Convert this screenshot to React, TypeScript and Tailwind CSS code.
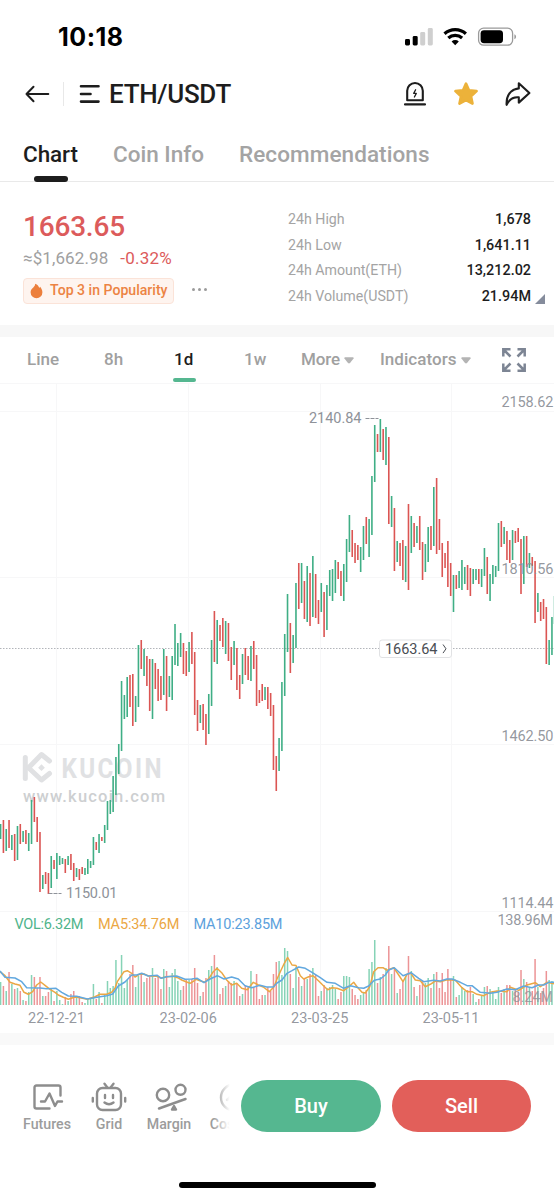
import React from 'react';

// [high y, low y, volume height, up = 1 / down = 0]
const CANDLES: number[][] = [
  [824, 839, 23, 1], [820, 853, 19, 0], [829, 851, 14, 1], [820, 848, 33, 0], [835, 850, 21, 1], [834, 861, 16, 0],
  [826, 860, 17, 1], [824, 844, 14, 0], [831, 842, 5, 1], [830, 844, 4, 0], [833, 851, 13, 1], [800, 844, 30, 1],
  [797, 822, 28, 0], [817, 842, 17, 0], [832, 892, 28, 0], [875, 889, 9, 1], [872, 884, 9, 0], [873, 894, 13, 0],
  [856, 888, 16, 1], [860, 869, 4, 0], [853, 879, 14, 1], [856, 865, 5, 1], [858, 864, 1, 1], [859, 873, 8, 0],
  [856, 865, 4, 1], [854, 870, 11, 0], [863, 881, 14, 0], [868, 877, 9, 1], [869, 880, 9, 0], [867, 874, 3, 0],
  [868, 875, 2, 1], [859, 874, 6, 1], [861, 868, 7, 1], [837, 865, 21, 1], [842, 850, 6, 0], [834, 853, 13, 1],
  [837, 841, 2, 0], [825, 843, 11, 1], [801, 830, 24, 1], [800, 814, 17, 1], [776, 812, 19, 1], [757, 795, 45, 1],
  [744, 774, 22, 1], [681, 751, 50, 1], [695, 719, 17, 1], [677, 717, 25, 1], [675, 707, 31, 0], [674, 726, 40, 0],
  [696, 722, 18, 1], [645, 707, 29, 1], [640, 669, 32, 0], [649, 676, 23, 1], [656, 686, 27, 0], [659, 711, 28, 0],
  [659, 719, 37, 1], [663, 689, 27, 0], [669, 701, 28, 0], [676, 700, 16, 0], [649, 695, 36, 1], [656, 711, 34, 0],
  [676, 697, 18, 1], [656, 700, 32, 1], [624, 665, 36, 1], [643, 666, 24, 1], [633, 657, 15, 1], [643, 674, 19, 0],
  [651, 676, 25, 0], [642, 672, 25, 1], [632, 664, 26, 0], [652, 715, 37, 0], [700, 731, 22, 0], [705, 723, 9, 1],
  [704, 730, 13, 0], [714, 745, 27, 0], [694, 734, 35, 1], [640, 706, 39, 1], [611, 662, 50, 0], [620, 664, 38, 1],
  [625, 641, 11, 0], [618, 647, 17, 0], [621, 654, 19, 1], [623, 661, 24, 0], [647, 680, 22, 0], [641, 665, 24, 1],
  [648, 690, 22, 0], [675, 699, 9, 0], [654, 684, 11, 1], [648, 675, 20, 0], [656, 680, 18, 0], [646, 681, 34, 1],
  [641, 669, 18, 0], [655, 706, 31, 0], [690, 703, 6, 0], [684, 701, 10, 0], [687, 700, 10, 1], [687, 709, 18, 0],
  [693, 716, 14, 0], [705, 770, 31, 0], [756, 791, 43, 0], [738, 771, 44, 1], [682, 751, 30, 1], [634, 696, 57, 1],
  [594, 652, 54, 1], [623, 673, 31, 0], [635, 663, 17, 1], [583, 648, 38, 1], [563, 609, 28, 0], [563, 603, 19, 1],
  [581, 619, 27, 0], [566, 622, 26, 1], [573, 626, 31, 0], [556, 617, 37, 1], [574, 618, 30, 0], [600, 624, 9, 0],
  [583, 612, 14, 1], [592, 637, 20, 0], [585, 630, 17, 1], [570, 596, 18, 1], [569, 601, 20, 1], [560, 593, 16, 1],
  [562, 579, 6, 0], [571, 596, 13, 0], [564, 601, 29, 1], [539, 582, 29, 1], [515, 552, 28, 1], [530, 557, 16, 0],
  [543, 563, 10, 0], [545, 560, 6, 0], [547, 572, 10, 1], [526, 560, 12, 1], [517, 544, 15, 0], [519, 557, 36, 1],
  [476, 535, 43, 1], [425, 482, 65, 1], [434, 452, 22, 0], [419, 452, 28, 1], [429, 460, 31, 0], [427, 465, 37, 1],
  [437, 524, 59, 0], [496, 527, 31, 1], [508, 571, 36, 0], [541, 562, 12, 1], [543, 566, 16, 0], [540, 580, 25, 0],
  [546, 582, 29, 1], [504, 590, 49, 0], [516, 553, 34, 1], [523, 547, 18, 0], [526, 543, 9, 1], [516, 550, 20, 0],
  [542, 580, 24, 0], [544, 572, 22, 1], [527, 562, 27, 1], [526, 550, 17, 0], [487, 546, 31, 1], [478, 554, 33, 0],
  [519, 550, 17, 0], [543, 577, 32, 0], [553, 568, 13, 0], [541, 587, 36, 0], [563, 596, 26, 0], [575, 612, 29, 1],
  [575, 589, 8, 0], [571, 588, 10, 1], [560, 590, 18, 1], [567, 584, 14, 1], [565, 590, 15, 0], [568, 596, 18, 0],
  [569, 584, 11, 1], [569, 580, 3, 1], [569, 584, 6, 0], [569, 587, 9, 1], [548, 576, 18, 1], [557, 594, 19, 0],
  [574, 601, 16, 1], [565, 584, 14, 1], [566, 577, 6, 1], [523, 571, 18, 1], [521, 547, 12, 0], [527, 544, 16, 1],
  [531, 560, 20, 0], [540, 563, 20, 0], [530, 560, 14, 1], [531, 543, 16, 0], [528, 542, 13, 0], [539, 594, 35, 0],
  [536, 584, 26, 1], [536, 567, 23, 0], [553, 568, 18, 1], [557, 566, 14, 0], [561, 623, 46, 0], [593, 612, 18, 1],
  [602, 621, 12, 0], [599, 619, 17, 0], [607, 664, 34, 0], [640, 665, 25, 1], [617, 655, 24, 1],
];

const MA5 =
  '0,971.7 5,975.7 10,982.3 15,984 20,985.3 24,992.3 28.3,994.3 32.7,991.7 36.7,985 40.7,982 45,985.3 50,989.3 55,992.3 58.3,995 63.3,997.3 68.3,999.3 75,997 80,997.7 87.3,999.3 95,996.7 100,994.3 106.7,994.3 111.7,992.3 115,988.3 117.3,981.7 120,977.7 124,971.7 127.3,970.7 131.7,973.3 135,977 139.3,974.3 144,974 148.3,976 156.7,976.3 161,978 166.7,976.7 173.3,976.3 177.7,977.7 181.7,980 186,981.7 190,983.3 193.3,981.3 196,979.3 200.7,981 205,982.3 209,978.3 213.3,971.7 217,968.3 221.7,972.7 226.7,980 231.7,985 236.7,983.3 241.7,988.3 247.3,989.7 253.3,982.3 258.3,985 263.3,987 269.3,991.7 274,986.7 277,979 280.3,971.7 284.3,963.3 287.7,957.5 292,965 296,965.5 300.3,975.7 303.7,979 308.7,976.7 313,975.7 318.7,981 323.7,986 327.7,989.7 332,987.7 337,988.3 343.7,990.7 348.7,986.7 353.7,982.3 357,986.7 362,992.3 365.3,993 369.7,986.7 373.7,971.7 378,967.7 383,967.7 387,970.3 393.7,967.7 398.7,975 403,981.7 407,974.3 411,973.3 415.3,980 420.3,980.7 425.3,986.7 430.3,984.3 435.3,981 440.3,981.7 447,979.7 455.3,980.3 462,987.7 467,991.7 472,991.7 477,994.3 483.7,995.7 490.3,992.3 497,991 507,991.7 510.3,987.3 518.7,990.3 527,985 535.3,982.7 540.3,986.7 547,982.3 554,983.7';
const MA10 =
  '0,971 5,977.3 15,978 21.7,981.7 26.7,987.7 40,988 46.7,988.7 56,988.3 61.7,992.3 68.3,996 76.7,996.3 87.3,999 100,996.7 106.7,995.7 112.7,994 118.3,986 125,982 131.7,975 136.7,975 141.7,973.3 148.3,976 157.3,975.3 161.3,978.3 166.7,976.7 176.7,976 185,979.3 191.7,979 197.3,978.3 204,982.7 210,979 217.3,975.7 224,979 231.7,977 238.3,979 245,985.7 251.7,987.7 260,985.3 266.7,987 273.3,987 277,983 282,980 287,973.3 292,970.7 298.7,967 305.3,968.3 312,972.3 320.3,977.7 327,982.3 335.3,983.3 343.7,988.3 350.3,985.7 358.7,987.7 363.7,988.3 368.7,986 374.3,980.3 380.3,979 385.3,975 388.7,970 394.3,967.7 403,975.7 411,972.7 418.7,978.3 423.7,981.7 433.7,980.3 440.3,981 447,979 452,979 460.3,982.3 467,985.7 472,985.7 480.3,992.3 490.3,993.3 497,992.3 507,989 515.3,989.7 523.7,986 532,987.7 538.7,985 543.7,985 548.7,982.3 554,982.3';

const candleX = (i: number) => 0.6 + i * 2.813;

const StatusBar: React.FC = () => (
  <div className="flex h-[72px] items-start justify-between pl-[58px] pr-[37px] pt-[22px]">
    <span className="font-['Inter'] text-[25px] font-bold leading-[30px] tracking-[0.5px] text-black">10:18</span>
    <svg width="114" height="22" viewBox="0 0 114 22" className="mt-1">
      <rect x="2" y="13" width="5" height="6.4" rx="1.4" />
      <rect x="9.7" y="10" width="5" height="9.4" rx="1.4" />
      <rect x="17.2" y="6" width="5" height="13.4" rx="1.4" fill="#cfcfcf" />
      <rect x="24.8" y="2" width="5" height="17.4" rx="1.4" fill="#cfcfcf" />
      <g fill="none" stroke="#000" strokeWidth="3.2">
        <path d="M41.5 7.8a16 16 0 0 1 21.4 0" />
        <path d="M45.3 12a10.3 10.3 0 0 1 13.8 0" />
      </g>
      <path d="M52.2 19.2l-3.6-3.7a5.3 5.3 0 0 1 7.2 0z" />
      <rect x="75.6" y="2.2" width="34" height="17" rx="5" fill="none" stroke="#9a9a9a" strokeWidth="1.3" />
      <rect x="77.6" y="4.2" width="22.4" height="13" rx="3.4" />
      <path d="M111.4 8.2v5c2.2-.8 2.2-4.2 0-5z" fill="#9a9a9a" />
    </svg>
  </div>
);

const Header: React.FC = () => (
  <header className="flex h-11 items-center pl-6 pr-[23px] text-[#1d1d1d]">
    <svg width="26" height="18" viewBox="0 0 26 18" fill="none" stroke="currentColor" strokeWidth="2" strokeLinecap="round" strokeLinejoin="round">
      <path d="M24.3 9H2.5M9.5 1.8L2.5 9l7 7.2" />
    </svg>
    <div className="ml-[13px] h-6 w-px bg-[#e8e8e8]" />
    <svg width="22" height="20" viewBox="0 0 22 20" className="ml-[15px]" fill="none" stroke="currentColor" strokeWidth="2.6" strokeLinecap="round">
      <path d="M2 2.3h17.500M2 10h9.500M2 17.600h17.500" />
    </svg>
    <h1 className="ml-[8px] text-[26px] font-medium tracking-[-0.3px]">ETH/USDT</h1>
    <div className="ml-auto flex items-center">
      <svg width="24" height="26" viewBox="0 0 24 26" fill="none" stroke="currentColor" strokeWidth="2.1" strokeLinejoin="round" strokeLinecap="round">
        <path d="M4.2 19.2V9.8a7.800 7.800 0 0 1 15.600 0v9.400zM2 23.400h20" />
        <path d="M12.6 8.800l-1.900 3.600h2.600l-1.900 3.600" strokeWidth="1.300" />
      </svg>
      <svg width="26" height="26" viewBox="0 0 26 26" className="ml-[26px]" fill="#ecb23a" stroke="#ecb23a" strokeWidth="2.600" strokeLinejoin="round">
        <path d="M13 2.600l3 6.600 7.600.9-5.600 5.100 1.500 7.400L13 19l-6.500 3.600L8 15.200l-5.600-5.100 7.600-.9z" />
      </svg>
      <svg width="27" height="26" viewBox="0 0 27 26" className="ml-[25px]" fill="none" stroke="currentColor" strokeWidth="2.100" strokeLinejoin="round">
        <path d="M14.800 2.200L25.400 12 14.800 21.600v-5.200c-5.600-.6-9.400 1.600-12.200 7.400C2.200 14.400 6.600 8.400 14.800 7.400z" />
      </svg>
    </div>
  </header>
);

const Tabs: React.FC = () => (
  <nav className="flex h-[66px] items-start border-b border-[#e9e9e9] pl-[23px] text-[22.5px] font-medium leading-[30px] text-[#a4a4a4]">
    <div className="mt-[23px] flex w-[55px] flex-col items-center text-[#1d1d1d]">
      <span className="tracking-[-0.1px]">Chart</span>
      <span className="mt-[7px] h-[6px] w-[34px] rounded-full bg-[#1d1d1d]" />
    </div>
    <span className="ml-[35px] mt-[23px] w-[91px] whitespace-nowrap">Coin Info</span>
    <span className="ml-[35px] mt-[23px] whitespace-nowrap tracking-[0.08px]">Recommendations</span>
  </nav>
);

const STATS = [
  { label: '24h High', value: '1,678' },
  { label: '24h Low', value: '1,641.11' },
  { label: '24h Amount(ETH)', value: '13,212.02' },
  { label: '24h Volume(USDT)', value: '21.94M' },
];

const Summary: React.FC = () => (
  <section className="flex h-[143px] justify-between pl-[23px] pr-[23px] pt-[25px]">
    <div>
      <div className="text-[28px] font-medium leading-10 tracking-[-0.2px] text-[#dc5b5b]">1663.65</div>
      <div className="mt-[-1px] flex gap-3 text-[17px] leading-6">
        <span className="tracking-[0.1px] text-[#a0a0a0]">≈$1,662.98</span>
        <span className="tracking-[0.2px] text-[#dc5b5b]">-0.32%</span>
      </div>
      <div className="mt-[8px] flex items-center">
        <div className="flex h-[26px] w-[151px] items-center whitespace-nowrap rounded-sm border border-[#fbe3d8] bg-[#fef4ef] pl-[6px] text-[14.1px] font-medium text-[#ec8343]">
          <svg width="13" height="16" viewBox="0 0 13 16" className="mr-[7px]" fill="#ec7f3c">
            <path d="M5.2.8c2.4 1 3.6 2.4 4 4.2l.9-1.3c1.4 1.6 2.3 3.600 2.3 5.500A5.900 5.900 0 0 1 6.500 15.200 5.900 5.900 0 0 1 .6 9.300c0-2.300 1.200-3.600 2.700-4.900C4.500 3.400 5.200 2.300 5.200.8z" />
          </svg>
          Top 3 in Popularity
        </div>
        <div className="-mt-[3px] ml-[18px] flex gap-[3px]">
          <i className="h-[3px] w-[3px] rounded-full bg-[#9b9b9b]" />
          <i className="h-[3px] w-[3px] rounded-full bg-[#9b9b9b]" />
          <i className="h-[3px] w-[3px] rounded-full bg-[#9b9b9b]" />
        </div>
      </div>
    </div>
    <dl className="relative w-[243px] text-[14.4px] leading-[25.6px]">
      {STATS.map((s) => (
        <div key={s.label} className="flex justify-between">
          <dt className="text-[14.200px] text-[#a4a4a4]">{s.label}</dt>
          <dd className="font-medium text-[#1d1d1d]">{s.value}</dd>
        </div>
      ))}
      <svg width="10" height="10" viewBox="0 0 10 10" className="absolute -right-[14px] top-[87px]" fill="#858c9c">
        <path d="M10 0v10H0z" />
      </svg>
    </dl>
  </section>
);

const Caret: React.FC = () => (
  <svg width="10" height="7" viewBox="0 0 10 7" className="ml-1" fill="#b4b4b4">
    <path d="M1 .3h8q1 .2.600 1.200L6 6q-1 .9-2 0L.4 1.500Q0 .5 1 .3z" />
  </svg>
);

const Intervals: React.FC = () => (
  <div className="flex h-[46px] items-center pl-[27px] text-[17px] font-medium text-[#a0a0a0]">
    <span className="w-[77px]">Line</span>
    <span className="w-[70px]">8h</span>
    <span className="relative w-[70px] text-[#1d1d1d]">
      1d
      <span className="absolute -bottom-[9px] -left-[1px] h-1 w-[23px] rounded-full bg-[#55b790]" />
    </span>
    <span className="w-[57px]">1w</span>
    <span className="flex w-[79px] items-center tracking-[-0.1px]">More<Caret /></span>
    <span className="flex w-[121px] items-center"><span className="tracking-[0.04px]">Indicators</span><Caret /></span>
    <svg width="26" height="26" viewBox="0 0 26 26" fill="none" stroke="#7d8594" strokeWidth="2.500">
      <path d="M2.300 9.500V2.300h7.200M2.500 2.500l7 7M16.500 2.300h7.200v7.200M23.500 2.500l-7 7M2.300 16.500v7.200h7.200M2.500 23.500l7-7M16.500 23.700h7.200v-7.200M23.500 23.500l-7-7" />
    </svg>
  </div>
);

const GRID_X = [56.5, 188.5, 320.5, 451.5];
const GRID_Y = [411.5, 577.5, 744.5, 911.5];

const Chart: React.FC = () => (
  <svg width="554" height="650" viewBox="0 383 554 650" className="block" fontSize="14.500">
    <g stroke="#f7f7f8" strokeWidth="1">
      <path d="M0 383.500h554" />
      {GRID_X.map((x) => <path key={x} d={`M${x} 383V1005`} />)}
      {GRID_Y.map((y) => <path key={y} d={`M0 ${y}h554`} />)}
    </g>

    {/* watermark */}
    <g stroke="#e0e1e3" fill="none" strokeWidth="5" strokeLinecap="round" strokeLinejoin="round">
      <path d="M25.300 757.500v21" />
      <path d="M49.500 761l-8-6.500-13 13.300 13 12.200 8-6.500" />
    </g>
    <path d="M41.500 764.300l3.400 3.400-3.400 3.400-3.400-3.400z" fill="#e0e1e3" />
    <text transform="translate(61.500 777.800) scale(0.880 1)" fontSize="27.500" fontWeight="700" textLength="113.600" fill="#e0e1e3">KUCOIN</text>
    <text x="23" y="801.500" fontSize="16.500" fontWeight="500" textLength="142" fill="#cdcfd1">www.kucoin.com</text>

    <path d="M0 648.500h554" stroke="#b2b5ba" strokeWidth="1" strokeDasharray="1.500 1.500" />

    {CANDLES.map(([high, low, , up], i) => (
      <rect key={i} x={candleX(i) - 0.8} y={high} width="1.600" height={low - high} fill={up ? '#3fae85' : '#db5553'} />
    ))}
    <path d="M553.700 596v28" stroke="#b5dfd0" strokeWidth="0.800" />

    {CANDLES.map(([, , volume, up], i) => (
      <rect key={i} x={candleX(i) - 0.75} y={1005 - volume} width="1.500" height={volume} fill={up ? '#86d3b6' : '#ec9496'} />
    ))}
    <polyline points={MA5} fill="none" stroke="#eba744" strokeWidth="1.500" strokeLinejoin="round" />
    <polyline points={MA10} fill="none" stroke="#62a8df" strokeWidth="1.500" strokeLinejoin="round" />

    <g fill="#8e9299">
      <text x="309" y="422.500" textLength="52.500">2140.84</text>
      <path d="M365.500 418.500h13M48.500 893.500h13" stroke="#8e9299" strokeDasharray="4 1" />
      <text x="66" y="898" textLength="51.500">1150.01</text>
    </g>
    <g fill="#8e9299" fillOpacity="0.950">
      <text x="501.500" y="406.500" textLength="52">2158.62</text>
      <text x="501.500" y="573.500" textLength="52">1810.56</text>
      <text x="501.500" y="740.500" textLength="52">1462.50</text>
      <text x="501.500" y="907.500" textLength="52">1114.44</text>
      <text x="497.500" y="925" textLength="55.500">138.96M</text>
      <text x="512.500" y="1001.500" textLength="40.500" fillOpacity="0.800">8.24M</text>
      <text x="28" y="1023.300" textLength="57">22-12-21</text>
      <text x="159.500" y="1023.300" textLength="57.500">23-02-06</text>
      <text x="291" y="1023.300" textLength="57.500">23-03-25</text>
      <text x="422.500" y="1023.300" textLength="57">23-05-11</text>
    </g>

    <rect x="379.500" y="640" width="72" height="17.500" rx="2.500" fill="#fff" stroke="#e1e2e4" />
    <text x="385" y="654" textLength="52.500" fill="#494d53">1663.64</text>
    <path d="M443 644.500l3 4.300-3 4.300" fill="none" stroke="#494d53" strokeWidth="1" />

    <text x="14.500" y="929" textLength="69" fill="#4fb48b">VOL:6.32M</text>
    <text x="98" y="929" textLength="81.500" fill="#eba744">MA5:34.76M</text>
    <text x="193.500" y="929" textLength="89" fill="#5ca1dc">MA10:23.85M</text>
  </svg>
);

const Shortcut: React.FC<{ label: string; className: string; children: React.ReactNode }> = ({ label, className, children }) => (
  <div className={`flex shrink-0 flex-col items-center ${className}`}>
    <svg width="36" height="30" viewBox="0 0 36 30" className="shrink-0" fill="none" stroke="#8d8d8d" strokeWidth="2.400" strokeLinecap="round" strokeLinejoin="round">
      {children}
    </svg>
    <span className="mt-[2px] whitespace-nowrap text-[14.200px] font-medium leading-5 text-[#9c9c9c]">{label}</span>
  </div>
);

const BottomBar: React.FC = () => (
  <footer className="flex pl-[23px] pt-[35px]">
    <div className="relative flex w-[218px] overflow-hidden pt-[2px]">
      <Shortcut label="Futures" className="w-12">
        <path d="M20.500 26.500H7.500q-2 0-2-2v-19q0-2 2-2h22q2 0 2 2V13.500M12 19.500h4l4.500-8 5.500 12.500 2.500-4.500h4.500" />
      </Shortcut>
      <Shortcut label="Grid" className="ml-[20px] w-9">
        <rect x="6" y="6" width="24" height="22" rx="5.500" />
        <path d="M13.500 1.800l2.700 3.400M22.500 1.800l-2.700 3.400M1.800 16v3.500M34.200 16v3.500M14 13v3M22 13v3M13.500 20.500q4.500 3.500 9 0" />
      </Shortcut>
      <Shortcut label="Margin" className="ml-[18px] w-12">
        <circle cx="12" cy="13" r="6.200" />
        <circle cx="29.500" cy="7.800" r="5" />
        <path d="M8 26.500L34.500 17" />
        <path d="M23 24l2 3.500h-4z" fill="#8d8d8d" />
      </Shortcut>
      <Shortcut label="Cos" className="ml-[13px] w-[32px]">
        <path d="M30 2.500a13 13 0 1 0 0 26" />
        <path d="M23 18l5-4.500" />
      </Shortcut>
      <div className="absolute right-0 top-0 h-full w-7 bg-linear-to-r from-white/0 from-0% to-white to-60%" />
    </div>
    <button className="h-[52px] w-[140px] rounded-full bg-[#55b790] text-[20px] font-medium text-white">Buy</button>
    <button className="ml-[11px] h-[52px] w-[139px] rounded-full bg-[#e25f5a] text-[20px] font-medium text-white">Sell</button>
  </footer>
);

export default function App() {
  return (
    <div className="flex h-[1200px] w-[554px] flex-col overflow-hidden bg-white font-['Roboto',sans-serif]">
      <StatusBar />
      <Header />
      <Tabs />
      <Summary />
      <div className="h-3 bg-[#f7f7f7]" />
      <Intervals />
      <Chart />
      <div className="h-3 bg-[#f9f9f9]" />
      <BottomBar />
      <div className="mb-[12px] mt-auto flex justify-center">
        <div className="h-[6px] w-[197px] rounded-full bg-black" />
      </div>
    </div>
  );
}
